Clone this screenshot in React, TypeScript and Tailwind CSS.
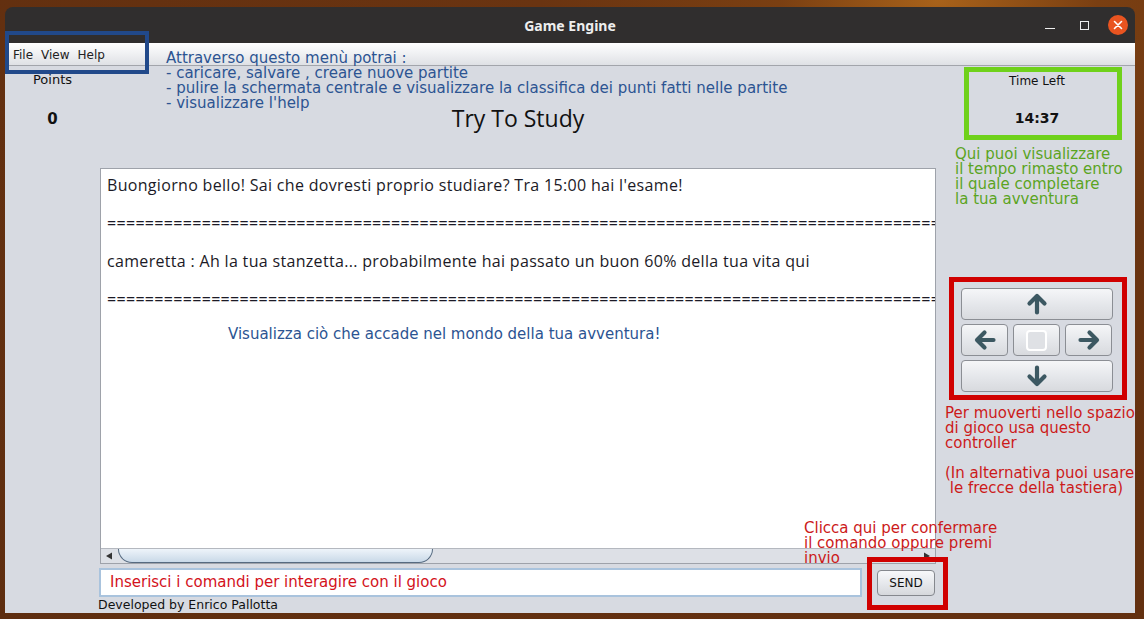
const dejavu = "font-['DejaVu_Sans',sans-serif]";

const Arrow = ({ rotate }: { rotate: string }) => (
  <svg width="24" height="24" viewBox="0 0 24 24" className={rotate}>
    <path
      d="M12 20.5V5 M4.5 11.5 L12 4 L19.5 11.5"
      fill="none"
      stroke="#3c5862"
      strokeWidth="4.2"
      strokeLinecap="round"
      strokeLinejoin="round"
    />
  </svg>
);

const PadButton = ({ children, wide }: { children?: React.ReactNode; wide?: boolean }) => (
  <div
    className={`${wide ? 'w-[152px]' : 'w-[47px]'} h-[32px] flex items-center justify-center rounded-[4px] border border-[#8b8e94] bg-[linear-gradient(#f5f6f8,#e4e6ea_55%,#d8dade)]`}
  >
    {children}
  </div>
);

const TextArea = () => {
  const eq = '='.repeat(140);
  return (
    <div className="flex-1 bg-white px-[6px] pt-[7px] overflow-hidden whitespace-pre font-['Open_Sans',sans-serif] text-[16px] leading-[19px] tracking-[0.32px] text-[#1b1a26]">
      <div>Buongiorno bello! Sai che dovresti proprio studiare? Tra 15:00 hai l'esame!</div>
      <div>&nbsp;</div>
      <div>{eq}</div>
      <div>&nbsp;</div>
      <div>cameretta : Ah la tua stanzetta... probabilmente hai passato un buon 60% della tua vita qui</div>
      <div>&nbsp;</div>
      <div>{eq}</div>
    </div>
  );
};

export default function App() {
  return (
    <div className="relative w-[1144px] h-[619px] overflow-hidden bg-[radial-gradient(ellipse_at_82%_0%,#a8621a_0%,#7a3f12_12%,#6a3411_30%,#5e2d0f_100%)] pt-[7px] pl-[5px]">
      <div className="w-[1130px] h-[606px] flex flex-col rounded-t-[8px] overflow-hidden">
        {/* title bar */}
        <div className="relative h-[36px] bg-[#302e2e] flex items-center justify-center">
          <span className="font-['Noto_Sans',sans-serif] font-bold text-[14px] text-[#eeeeee]">Game Engine</span>
          <div className="absolute right-0 top-0 h-full flex items-center">
            <div className="w-[34px] flex justify-center">
              <div className="w-[10px] h-[1.5px] bg-[#eeeeee] mt-[7px]" />
            </div>
            <div className="w-[34px] flex justify-center">
              <div className="w-[9px] h-[9px] border-[1.5px] border-[#eeeeee]" />
            </div>
            <div className="w-[34px] flex justify-center">
              <div className="w-[20px] h-[20px] rounded-full bg-[#e95420] flex items-center justify-center">
                <svg width="10" height="10" viewBox="0 0 10 10">
                  <path d="M1.5 1.5 L8.5 8.5 M8.5 1.5 L1.5 8.5" stroke="#fff" strokeWidth="1.6" strokeLinecap="round" />
                </svg>
              </div>
            </div>
          </div>
        </div>
        {/* menu bar */}
        <div className={`h-[23px] bg-[linear-gradient(#ffffff,#f2f3f5_40%,#dfe1e5)] border-b border-[#a2a5ab] flex items-center gap-[8px] pl-[8px] pt-[1px] text-[12px] text-[#222] ${dejavu}`}>
          <span>File</span>
          <span>View</span>
          <span>Help</span>
        </div>
        {/* body */}
        <div className="flex-1 flex bg-[#d7dae1]">
          {/* left */}
          <div className={`w-[95px] flex flex-col items-center text-[#111] ${dejavu}`}>
            <span className="mt-[6px] text-[13px] leading-[15px]">Points</span>
            <span className="mt-[23px] font-bold text-[15px] leading-[18px]">0</span>
          </div>
          {/* center */}
          <div className="w-[836px] flex flex-col">
            <div className="h-[102px] flex items-center justify-center pt-[2px]">
              <span className="font-['Open_Sans',sans-serif] text-[23px] text-[#111]">Try To Study</span>
            </div>
            <div className="h-[396px] flex flex-col border border-[#9ea2aa]">
              <TextArea />
              <div className="h-[15px] flex items-center bg-[#dde0e6] border-t border-[#b4b8bf]">
                <svg width="8" height="8" viewBox="0 0 8 8" className="ml-[4px]">
                  <path d="M1 4 L7 0.5 L7 7.5 Z" fill="#333" />
                </svg>
                <div className="ml-[5px] w-[315px] h-[14px] rounded-b-full border border-[#566a80] border-t-0 bg-[linear-gradient(#eef4fa,#c9d9e8)]" />
                <svg width="8" height="8" viewBox="0 0 8 8" className="ml-auto mr-[4px]">
                  <path d="M7 4 L1 0.5 L1 7.5 Z" fill="#333" />
                </svg>
              </div>
            </div>
            <div className="mt-[4px] h-[29px] flex items-center gap-[15px]">
              <div className="-ml-[1px] w-[763px] h-[29px] bg-white border-2 border-[#a9c3dd] flex items-center pl-[9px]">
                <span className={`text-[15px] text-[#d3121b] ${dejavu}`}>Inserisci i comandi per interagire con il gioco</span>
              </div>
              <div className={`w-[58px] h-[26px] rounded-[4px] border border-[#85888e] bg-[linear-gradient(#f7f8fa,#e5e7eb_55%,#d6d8dc)] flex items-center justify-center text-[12px] text-[#111] ${dejavu}`}>
                SEND
              </div>
            </div>
            <div className={`-ml-[2px] mt-[1px] text-[12.5px] leading-[14px] text-[#111] ${dejavu}`}>Developed by Enrico Pallotta</div>
          </div>
          {/* right */}
          <div className={`w-[199px] flex flex-col ${dejavu}`}>
            <div className="mt-[1px] ml-[28px] w-[158px] h-[73px] border-[5px] border-[#6fd11b] flex flex-col items-center pr-[12px]">
              <span className="mt-[2px] text-[12px] leading-[15px] text-[#111]">Time Left</span>
              <span className="mt-[20px] font-bold text-[14px] leading-[18px] text-[#111]">14:37</span>
            </div>
            <div className="mt-[7px] ml-[19px] text-[15px] leading-[15px] text-[#5ba41f]">
              <div>Qui puoi visualizzare</div>
              <div>il tempo rimasto entro</div>
              <div>il quale completare</div>
              <div>la tua avventura</div>
            </div>
            <div className="mt-[70px] ml-[13px] w-[178px] h-[123px] border-[5px] border-[#d00000] pt-[6px] pl-[7px] flex flex-col gap-[4px]">
              <PadButton wide>
                <Arrow rotate="" />
              </PadButton>
              <div className="flex gap-[5px]">
                <PadButton>
                  <Arrow rotate="-rotate-90" />
                </PadButton>
                <PadButton>
                  <div className="w-[21px] h-[21px] rounded-[4px] border-2 border-white bg-[#dfe1e5]" />
                </PadButton>
                <PadButton>
                  <Arrow rotate="rotate-90" />
                </PadButton>
              </div>
              <PadButton wide>
                <Arrow rotate="rotate-180" />
              </PadButton>
            </div>
            <div className="mt-[6px] ml-[9px] text-[15px] leading-[15px] text-[#cc1a1a] whitespace-pre">
              <div>Per muoverti nello spazio</div>
              <div>di gioco usa questo</div>
              <div>controller</div>
              <div>&nbsp;</div>
              <div>(In alternativa puoi usare</div>
              <div> le frecce della tastiera)</div>
            </div>
          </div>
        </div>
      </div>

      {/* annotations overlay */}
      <div className="absolute left-[5px] top-[31px] w-[144px] h-[43px] border-[4px] border-[#21498a]" />
      <div className={`absolute left-[166px] top-[51px] text-[15px] leading-[15px] text-[#2c5492] ${dejavu}`}>
        <div>Attraverso questo menù potrai :</div>
        <div>- caricare, salvare , creare nuove partite</div>
        <div>- pulire la schermata centrale e visualizzare la classifica dei punti fatti nelle partite</div>
        <div>- visualizzare l'help</div>
      </div>
      <div className={`absolute left-[228px] top-[323px] text-[15px] text-[#2c5492] ${dejavu}`}>
        Visualizza ciò che accade nel mondo della tua avventura!
      </div>
      <div className={`absolute left-[804px] top-[521px] text-[15px] leading-[15px] text-[#cc1a1a] ${dejavu}`}>
        <div>Clicca qui per confermare</div>
        <div>il comando oppure premi</div>
        <div>invio</div>
      </div>
      <div className="absolute left-[867px] top-[557px] w-[81px] h-[53px] border-[5px] border-[#d00000]" />
    </div>
  );
}
